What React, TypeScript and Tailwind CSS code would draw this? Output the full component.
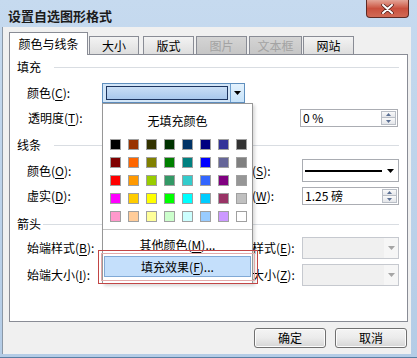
import React from "react";

const COLORS: string[][] = [
  ["#000000", "#993300", "#333300", "#003300", "#003366", "#000080", "#333399", "#333333"],
  ["#800000", "#FF6600", "#808000", "#008000", "#008080", "#0000FF", "#666699", "#808080"],
  ["#FF0000", "#FF9900", "#99CC00", "#339966", "#33CCCC", "#3366FF", "#800080", "#969696"],
  ["#FF00FF", "#FFCC00", "#FFFF00", "#00FF00", "#00FFFF", "#00CCFF", "#993366", "#C0C0C0"],
  ["#FF99CC", "#FFCC99", "#FFFF99", "#CCFFCC", "#CCFFFF", "#99CCFF", "#CC99FF", "#FFFFFF"],
];

function Acc({ k }: { k: string }) {
  return (
    <>
      (<span className="underline underline-offset-2">{k}</span>):
    </>
  );
}

function Header({ text, gap }: { text: string; gap: string }) {
  return (
    <div className="flex items-center h-[18px] pl-[7px] pr-[8px]">
      <span className="leading-none">{text}</span>
      <div className={`flex-1 h-px bg-[#d9dde2] ${gap}`} />
    </div>
  );
}

function Tri({ color, w = 7, h = 4 }: { color: string; w?: number; h?: number }) {
  return (
    <svg width={w} height={h} viewBox={`0 0 ${w} ${h}`}>
      <polygon points={`0,0 ${w},0 ${w / 2},${h}`} fill={color} />
    </svg>
  );
}

function Spinner({ text, w }: { text: string; w: string }) {
  return (
    <div className={`h-[18px] ${w} border border-[#abadb3] bg-white flex items-center pl-[2px] pr-[1px]`}>
      <span className="flex-1 leading-none">{text}</span>
      <div className="flex flex-col w-[15px] h-[14px]">
        <div className="h-[7px] border border-[#b9bec6] bg-gradient-to-b from-[#fafafa] to-[#e4e6ea] flex items-center justify-center">
          <svg width="5" height="3" viewBox="0 0 5 3">
            <polygon points="0,3 5,3 2.5,0" fill="#5a6f93" />
          </svg>
        </div>
        <div className="h-[7px] border border-t-0 border-[#b9bec6] bg-gradient-to-b from-[#fafafa] to-[#e4e6ea] flex items-center justify-center">
          <svg width="5" height="3" viewBox="0 0 5 3">
            <polygon points="0,0 5,0 2.5,3" fill="#5a6f93" />
          </svg>
        </div>
      </div>
    </div>
  );
}

function DisabledCombo() {
  return (
    <div className="h-[22px] w-[97px] border border-[#c6c9cf] bg-[#f0f0f0] flex">
      <div className="flex-1" />
      <div className="w-[14px] bg-[#f6f6f6] flex items-center justify-center">
        <Tri color="#a5a5a5" w={7} h={4} />
      </div>
    </div>
  );
}

function Tab({ children, w, ml, disabled }: { children: React.ReactNode; w: string; ml: string; disabled?: boolean }) {
  return (
    <div
      className={`${w} ${ml} h-[18px] border border-b-0 border-[#898c95] flex items-center justify-center leading-none ${
        disabled
          ? "bg-gradient-to-b from-[#d4d4d4] to-[#c6c6c6] text-[#a3a3a3]"
          : "bg-gradient-to-b from-[#f3f3f3] to-[#dedede] text-black"
      }`}
    >
      {children}
    </div>
  );
}

function Btn({ children }: { children: React.ReactNode }) {
  return (
    <div className="w-[72px] h-[20px] rounded-[3px] border border-[#707070] bg-gradient-to-b from-[#f4f4f4] via-[#ebebeb] to-[#d5d5d5] flex items-center justify-center leading-none shadow-[inset_0_0_0_1px_#fcfcfc]">
      {children}
    </div>
  );
}

export default function App() {
  return (
    <div className="relative w-[417px] h-[358px] overflow-hidden flex flex-col bg-gradient-to-b from-[#c6daef] to-[#b4cce6] text-[12px] text-black font-['Noto_Sans_CJK_SC','Noto_Sans',sans-serif]">
      {/* title bar */}
      <div className="h-[27px] shrink-0 flex justify-between items-start">
        <div className="pl-[8px] pt-[7px] text-[13px] font-bold leading-[18px] text-[#1b1b1b]">设置自选图形格式</div>
        <div className="mr-[8px] w-[43px] h-[18px] rounded-b-[4px] border border-t-0 border-[#5e2a24] bg-gradient-to-b from-[#e3a497] via-[#c9503e] to-[#d16a55] flex items-center justify-center">
          <svg width="13" height="10" viewBox="0 0 13 10">
            <path d="M2 1 L11 9 M11 1 L2 9" stroke="#4a1a16" strokeWidth="3.4" strokeLinecap="round" />
            <path d="M2 1 L11 9 M11 1 L2 9" stroke="#ffffff" strokeWidth="2" strokeLinecap="round" />
          </svg>
        </div>
      </div>

      {/* body */}
      <div className="flex-1 ml-[2px] mr-[6px] mb-[4px] border-l border-[#8b98a6] bg-[#f0f0f0] flex flex-col pl-[6px] pr-[3px] pt-[5px]">
        {/* tabs */}
        <div className="flex items-end h-[22px]">
          <div className="relative z-10 w-[79px] h-[23px] -mb-px bg-white border border-b-0 border-[#898c95] flex items-center justify-center leading-none pb-[1px]">
            颜色与线条
          </div>
          <Tab w="w-[50px]" ml="ml-[1px]">大小</Tab>
          <Tab w="w-[51px]" ml="ml-[4px]">版式</Tab>
          <Tab w="w-[51px]" ml="ml-[2px]" disabled>图片</Tab>
          <Tab w="w-[53px]" ml="ml-[2px]" disabled>文本框</Tab>
          <Tab w="w-[51px]" ml="ml-[1px]">网站</Tab>
        </div>

        {/* panel */}
        <div className="h-[268px] bg-white border border-[#898c95] flex flex-col">
          <div className="mt-[3px]">
            <Header text="填充" gap="ml-[13px]" />
          </div>
          {/* color row */}
          <div className="mt-[6px] h-[22px] flex items-center pl-[17px]">
            <div className="w-[75px] leading-none">
              颜色<Acc k="C" />
            </div>
            <div className="w-[143px] h-[20px] border border-[#5f8fbe] bg-[#d3e6f8] flex items-center pl-[3px]">
              <div className="w-[123px] h-[14px] border border-[#1d355f] bg-gradient-to-b from-[#c9def5] to-[#a9c8ec]" />
              <div className="ml-[2px] w-[14px] h-[18px] border-l border-[#6e9fcf] bg-gradient-to-b from-[#e4f2fd] to-[#c6e2f9] flex items-center justify-center">
                <Tri color="#000" w={7} h={4} />
              </div>
            </div>
          </div>
          {/* transparency */}
          <div className="mt-[4px] h-[20px] flex items-center pl-[18px]">
            <div className="w-[272px] leading-none">
              透明度<Acc k="T" />
            </div>
            <Spinner text="0 %" w="w-[98px]" />
          </div>

          <div className="mt-[8px]">
            <Header text="线条" gap="ml-[13px]" />
          </div>
          {/* line color / style */}
          <div className="mt-[5px] h-[23px] flex items-center pl-[17px]">
            <div className="w-[201px] leading-none">
              颜色<Acc k="O" />
            </div>
            <div className="w-[74px] leading-none">
              线型<Acc k="S" />
            </div>
            <div className="w-[97px] h-[23px] border border-[#a9acb2] bg-white flex items-center pl-[2px] pr-[4px]">
              <div className="flex-1 h-[2px] bg-black" />
              <div className="ml-[5px]">
                <Tri color="#000" w={7} h={4} />
              </div>
            </div>
          </div>
          {/* dash / weight */}
          <div className="mt-[5px] h-[18px] flex items-center pl-[17px]">
            <div className="w-[201px] leading-none">
              虚实<Acc k="D" />
            </div>
            <div className="w-[74px] leading-none">
              粗细<Acc k="W" />
            </div>
            <Spinner text="1.25 磅" w="w-[97px]" />
          </div>

          <div className="mt-[10px]">
            <Header text="箭头" gap="ml-[2px]" />
          </div>
          <div className="mt-[4px] h-[22px] flex items-center pl-[17px]">
            <div className="w-[201px] leading-none">
              始端样式<Acc k="B" />
            </div>
            <div className="w-[74px] leading-none whitespace-nowrap">
              末端样式<Acc k="E" />
            </div>
            <DisabledCombo />
          </div>
          <div className="mt-[5px] h-[22px] flex items-center pl-[17px]">
            <div className="w-[201px] leading-none">
              始端大小<Acc k="I" />
            </div>
            <div className="w-[74px] leading-none whitespace-nowrap">
              末端大小<Acc k="Z" />
            </div>
            <DisabledCombo />
          </div>
        </div>

        {/* buttons */}
        <div className="mt-[6px] flex justify-end gap-[9px] pr-[1px]">
          <Btn>确定</Btn>
          <Btn>取消</Btn>
        </div>
      </div>
      <div className="absolute left-0 right-0 bottom-0 h-px bg-[#5a7fa3]" />

      {/* color popup */}
      <div className="absolute left-[102px] top-[103px] w-[151px] h-[181px] bg-white border border-[#979797] shadow-[2px_2px_3px_rgba(0,0,0,0.15)] flex flex-col z-20">
        <div className="mt-[9px] h-[16px] leading-[16px] text-center">无填充颜色</div>
        <div className="mt-[10px] pl-[7px] grid grid-cols-[repeat(8,11px)] gap-[7px]">
          {COLORS.flat().map((c, i) => (
            <div key={i} className="w-[11px] h-[11px] border border-[#a0a0a0]" style={{ backgroundColor: c }} />
          ))}
        </div>
        <div className="mt-[7px] h-px bg-[#c5c5c5]" />
        <div className="mt-[7px] h-[16px] leading-[16px] text-center">
          其他颜色(<span className="underline underline-offset-2">M</span>)...
        </div>
        <div className="mt-[3px] mx-[1px] h-[21px] bg-[#c4dffb] border border-[#80a9d6] flex items-center justify-center leading-none">
          填充效果(<span className="underline underline-offset-2">F</span>)...
        </div>
      </div>
      {/* red highlight */}
      <div className="absolute left-[98px] top-[250px] w-[160px] h-[34px] border border-[#c24545] z-30">
        <div className="m-[2px] h-[28px] border border-[#e3a9a9]" />
      </div>
    </div>
  );
}
